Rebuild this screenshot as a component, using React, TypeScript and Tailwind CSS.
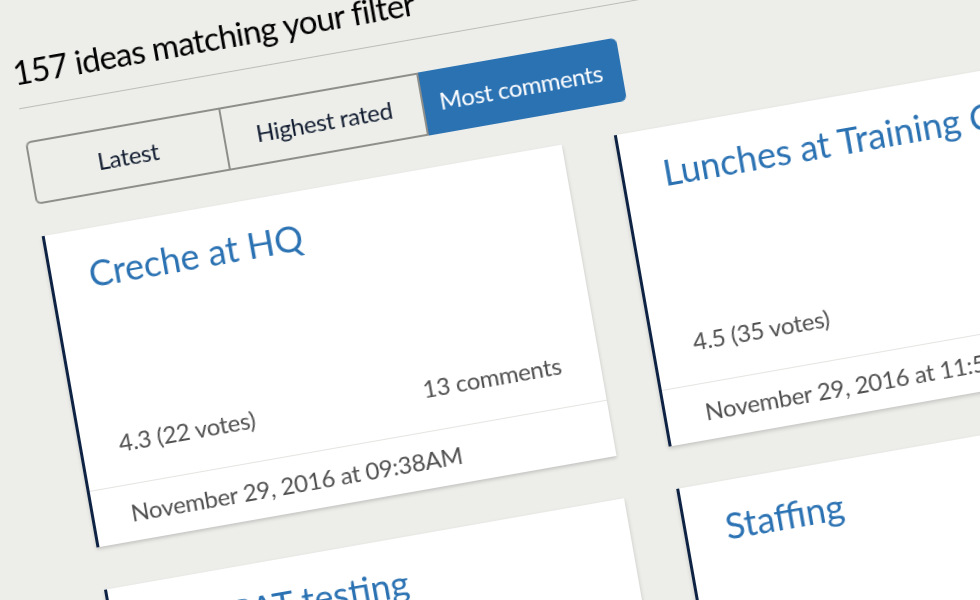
const tabs = [
  { label: 'Latest', className: 'w-[196px] rounded-l-[6px] border-2 border-r-0 border-[#8e8e8a]' },
  { label: 'Highest rated', className: 'w-[203px] border-2 border-[#8e8e8a] pl-[1px]' },
  { label: 'Most comments', className: 'w-[201px] rounded-r-[6px] bg-[#2b72b3] pr-[3px] text-white' },
]

const ideas = [
  { title: 'Creche at HQ', rating: '4.3 (22 votes)', comments: '13 comments', date: 'November 29, 2016 at 09:38AM' },
  { title: 'Lunches at Training Centre', rating: '4.5 (35 votes)', comments: '12 comments', date: 'November 29, 2016 at 11:52AM' },
  { title: 'Staff PAT testing', rating: '4.1 (18 votes)', comments: '11 comments', date: 'November 29, 2016 at 10:14AM' },
  { title: 'Staffing', rating: '4.0 (20 votes)', comments: '10 comments', date: 'November 29, 2016 at 10:40AM' },
]

function IdeaCard({ title, rating, comments, date }: (typeof ideas)[number]) {
  return (
    <div className="group flex h-[316px] flex-col border-l-[3px] border-[#0e2244] bg-white shadow-[0_2px_4px_rgba(0,0,0,0.18)]">
      <div className="flex flex-1 flex-col justify-between border-b border-[#e4e4e2] pt-[22px] pr-[39px] pb-[26px] pl-[37px] group-even:pl-[39px]">
        <h2 className="text-[36px] leading-[46px] text-[#2b72b3]">{title}</h2>
        <div className="flex justify-between text-[24px] leading-[32px] tracking-[-0.28px] text-[#505050]">
          <span>{rating}</span>
          <span>{comments}</span>
        </div>
      </div>
      <div className="flex h-[56px] items-center pl-[37px] text-[24px] tracking-[-0.28px] text-[#505050] group-even:pl-[39px]">{date}</div>
    </div>
  )
}

export default function App() {
  return (
    <div className="h-[600px] w-[980px] overflow-hidden bg-[#edeeea] font-['Lato',sans-serif]">
      <div className="w-[1110px] origin-top-left rotate-[-10deg] blur-[0.3px]">
        <h1 className="pt-[51px] text-[33px] leading-[46px] tracking-[-0.8px] text-black">157 ideas matching your filter</h1>
        <div className="mt-[13px] border-t border-[#bcbcb8]" />
        <div className="mt-[33px] flex h-[64px] w-[600px] text-[24px] tracking-[-0.35px] text-[#111c30]">
          {tabs.map((tab) => (
            <div key={tab.label} className={`flex items-center justify-center ${tab.className}`}>
              {tab.label}
            </div>
          ))}
        </div>
        <div className="mt-[32px] grid grid-cols-[528px_528px] gap-x-[53px] gap-y-[43px]">
          {ideas.map((idea) => (
            <IdeaCard key={idea.title} {...idea} />
          ))}
        </div>
      </div>
    </div>
  )
}
